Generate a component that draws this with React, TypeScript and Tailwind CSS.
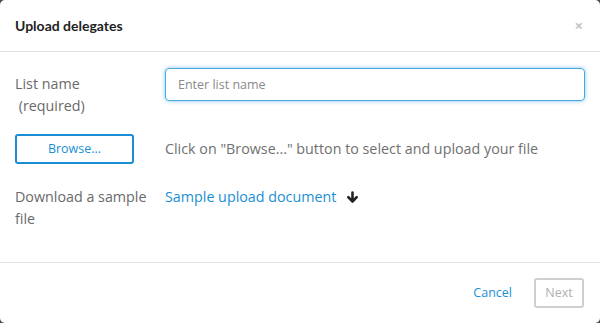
import React from 'react';

function DownArrow() {
  return (
    <svg width="13" height="13" viewBox="0 0 12 13" className="ml-[10px] mt-[1px]">
      <path d="M6 1.5v9M1.8 6.2L6 10.5l4.2-4.3" fill="none" stroke="#222" strokeWidth="2.6" strokeLinecap="round" strokeLinejoin="round" />
    </svg>
  );
}

export default function App() {
  return (
    <div className="w-[600px] h-[323px] bg-[#4a4a4a] font-['Open_Sans',sans-serif]">
      <div className="w-full h-full bg-white rounded-[5px] flex flex-col">
        {/* Header */}
        <div className="h-[52px] border-b border-[#e2e2e2] flex items-center justify-between pl-[15px] pr-[17px] shrink-0">
          <h1 className="font-['Lato',sans-serif] text-[14px] font-bold text-[#222]">Upload delegates</h1>
          <span className="text-[#c4c4c4] text-[15px] font-bold leading-none">×</span>
        </div>

        {/* Body */}
        <div className="flex-1 px-[15px] pt-[16px] flex flex-col">
          <div className="flex">
            <div className="w-[150px] text-[14.3px] text-[#6a6a6a] leading-[22px] pt-[5px]">
              List name<br />&nbsp;(required)
            </div>
            <input
              placeholder="Enter list name"
              className="w-[420px] h-[33px] border border-[#45a9de] rounded-[4px] px-[12px] text-[12.5px] text-[#333] placeholder:text-[#8a8a8a] outline-none shadow-[0_0_4px_rgba(40,150,220,0.55)]"
            />
          </div>

          <div className="flex items-center mt-[17px]">
            <div className="w-[150px]">
              <button className="w-[119px] h-[30px] border-2 border-[#1a8fd5] rounded-[3px] text-[12.5px] text-[#1a8fd5]">
                Browse...
              </button>
            </div>
            <span className="text-[14.3px] text-[#707070]">Click on "Browse..." button to select and upload your file</span>
          </div>

          <div className="flex mt-[22px]">
            <div className="w-[150px] text-[14.3px] text-[#6a6a6a] leading-[22px]">
              Download a sample<br />file
            </div>
            <div className="flex items-center h-[22px]">
              <a className="text-[14.3px] text-[#1a8fd5]">Sample upload document</a>
              <DownArrow />
            </div>
          </div>
        </div>

        {/* Footer */}
        <div className="h-[61px] border-t border-[#e2e2e2] flex items-center justify-end pr-[16px] shrink-0">
          <a className="text-[12.5px] text-[#1a8fd5] mr-[22px]">Cancel</a>
          <button className="w-[50px] h-[30px] border-2 border-[#cfcfcf] rounded-[3px] text-[12.5px] text-[#b0b0b0]">
            Next
          </button>
        </div>
      </div>
    </div>
  );
}
